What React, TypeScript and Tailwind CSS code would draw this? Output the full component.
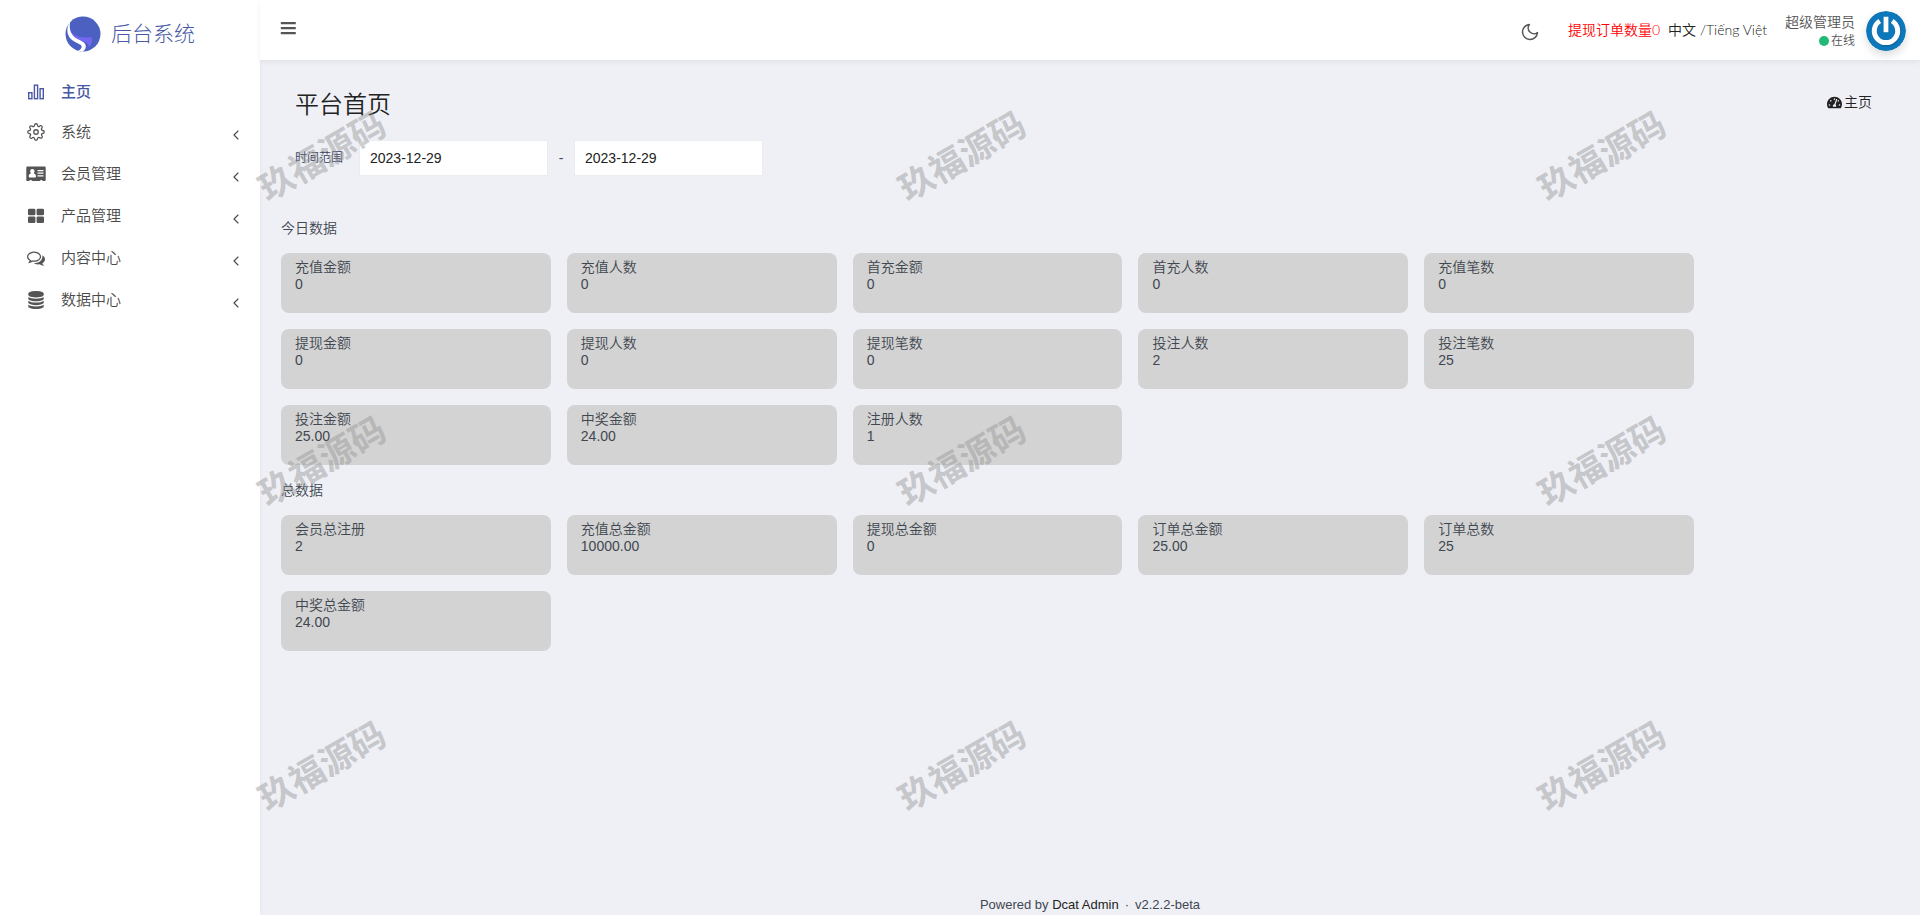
import React, { useState } from "react";
import { FaTachometerAlt } from "react-icons/fa";
import { FiMoon, FiChevronLeft, FiSettings } from "react-icons/fi";

type Stat = { label: string; value: string };

const TODAY: Stat[] = [
  { label: "充值金额", value: "0" },
  { label: "充值人数", value: "0" },
  { label: "首充金额", value: "0" },
  { label: "首充人数", value: "0" },
  { label: "充值笔数", value: "0" },
  { label: "提现金额", value: "0" },
  { label: "提现人数", value: "0" },
  { label: "提现笔数", value: "0" },
  { label: "投注人数", value: "2" },
  { label: "投注笔数", value: "25" },
  { label: "投注金额", value: "25.00" },
  { label: "中奖金额", value: "24.00" },
  { label: "注册人数", value: "1" },
];

const TOTAL: Stat[] = [
  { label: "会员总注册", value: "2" },
  { label: "充值总金额", value: "10000.00" },
  { label: "提现总金额", value: "0" },
  { label: "订单总金额", value: "25.00" },
  { label: "订单总数", value: "25" },
  { label: "中奖总金额", value: "24.00" },
];

function BarChartIcon() {
  return (
    <svg viewBox="0 0 18 18" className="size-[18px]" fill="none" stroke="currentColor" strokeWidth="1.4">
      <rect x="1.7" y="9.7" width="3.2" height="6" />
      <rect x="7.4" y="2.2" width="3.2" height="13.5" />
      <rect x="13.1" y="5.7" width="3.2" height="10" />
    </svg>
  );
}

function AddressCardIcon() {
  return (
    <svg viewBox="0 0 20 16" className="h-4 w-5" fill="currentColor">
      <path
        fillRule="evenodd"
        d="M1.2 0.5h17.6c.5 0 .9.4.9.9v12.7c0 .5-.4.9-.9.9H16.500v-.5c0-.3-.2-.6-.6-.6h-1.100c-.4 0-.6.3-.6.6v.5H5.800v-.5c0-.3-.2-.6-.6-.6H4.100c-.4 0-.6.3-.6.6v.5H1.200c-.5 0-.9-.4-.9-.9V1.400c0-.5.4-.9.9-.9zM6.300 3C5 3 4.200 3.900 4.200 5.200c0 .9.3 1.700.8 2.200-1.300.2-2.300 1-2.300 2.800 0 .8.5 1.300 1.200 1.300h4.900c.7 0 1.200-.5 1.200-1.300 0-1.800-1-2.600-2.300-2.800.5-.5.8-1.300.8-2.200C8.500 3.900 7.600 3 6.300 3zM11.500 4v1.200h6V4zM11.500 6.600v1.200h6V6.600zM11.500 9.200v1.200h6V9.200z"
      />
    </svg>
  );
}

function GridIcon() {
  return (
    <svg viewBox="0 0 18 18" className="size-[18px]" fill="currentColor">
      <rect x="1" y="1.800" width="7.400" height="6.500" rx="1.200" />
      <rect x="9.600" y="1.800" width="7.400" height="6.500" rx="1.200" />
      <rect x="1" y="9.500" width="7.400" height="6.500" rx="1.200" />
      <rect x="9.600" y="9.500" width="7.400" height="6.500" rx="1.200" />
    </svg>
  );
}

function CommentsIcon() {
  return (
    <svg viewBox="0 0 1792 1792" className="size-[18px]" fill="currentColor">
      <path d="M704 384q-153 0-286 52t-211.500 141-78.500 191q0 82 53 158t149 132l97 56-35 84q34-20 62-39l44-31 53 10q78 14 153 14 153 0 286-52t211.500-141 78.500-191-78.500-191-211.500-141-286-52zm0-128q191 0 353.500 68.500t256.500 186.500 94 257-94 257-256.500 186.500-353.500 68.500q-86 0-176-16-124 88-278 128-36 9-86 16h-3q-11 0-20.500-8t-11.500-21q-1-3-1-6.500t.5-6.500 2-6l2.500-5 3.500-5.500 4-5 4.500-5 4-4.500q5-6 23-25t26-29.500 22.500-29 25-38.500 20.500-44q-124-72-195-177t-71-224q0-139 94-257t256.500-186.500 353.500-68.500zm822 1169q10 24 20.500 44t25 38.500 22.500 29 26 29.500 23 25q1 1 4 4.500t4.500 5 4 5 3.500 5.500l2.500 5 2 6 .5 6.500-1 6.500q-3 14-13 22t-22 7q-50-7-86-16-154-40-278-128-90 16-176 16-271 0-472-132 58 4 88 4 161 0 309-45t264-129q125-92 192-212t67-254q0-77-23-152 129 71 204 178t75 230q0 120-71 224.500t-195 176.500z" />
    </svg>
  );
}

function DatabaseIcon() {
  return (
    <svg viewBox="0 0 1792 1792" className="size-[18px]" fill="currentColor">
      <path d="M896 768q237 0 443-43t325-127v170q0 69-103 128t-280 93.500-385 34.500-385-34.500-280-93.500-103-128v-170q119 84 325 127t443 43zm0 768q237 0 443-43t325-127v170q0 69-103 128t-280 93.500-385 34.500-385-34.500-280-93.500-103-128v-170q119 84 325 127t443 43zm0-384q237 0 443-43t325-127v170q0 69-103 128t-280 93.500-385 34.500-385-34.500-280-93.500-103-128v-170q119 84 325 127t443 43zm0-1152q208 0 385 34.500t280 93.500 103 128v128q0 69-103 128t-280 93.500-385 34.500-385-34.500-280-93.500-103-128v-128q0-69 103-128t280-93.500 385-34.500z" />
    </svg>
  );
}

function Logo() {
  return (
    <svg viewBox="0 0 36 36" className="size-9" aria-hidden="true">
      <circle cx="18" cy="18" r="17.500" fill="#4c60c2" />
      <path d="M4.500 14C7 18.500 12 20.500 17 21.300c4 .5 8 .4 9.500-.3 1.500 3 .5 7-2.500 10.500 0-4-3-5.500-7.500-6.500C10 23.500 5 20 4.500 14z" fill="#7367f0" />
      <path d="M5.200 5.500C2.300 9.500 1.500 15 3.500 19.500c2.500 5.500 8 7 12 9.200 2.300 1.600 1 4.500-2.500 6.300l4.500.8c2.900-1.900 4-4.400 3-7-1.200-3-4.800-4-8.500-6C5.800 19.500 3.800 13 5.200 5.500z" fill="#fff" />
    </svg>
  );
}

function Avatar() {
  return (
    <svg viewBox="0 0 40 40" className="mt-0.5 size-10 rounded-full shadow-[0_4px_8px_rgba(0,0,0,0.14)]" role="img" aria-label="超级管理员">
      <circle cx="20" cy="20" r="20" fill="#0c77b9" />
      <g fill="none">
        <path d="M13.500 9.800A12.200 12.200 0 1 0 26.500 9.800M20 7v14" stroke="#065a90" strokeWidth="5" transform="translate(.6 .8)" opacity=".5" />
        <path d="M13.800 10A11.700 11.700 0 1 0 26.200 10" stroke="#fff" strokeWidth="5" />
        <path d="M20 5.800v15.400" stroke="#fff" strokeWidth="4.800" />
      </g>
    </svg>
  );
}

const MENU = [
  { label: "系统", icon: <FiSettings className="size-[18px]" strokeWidth={1.7} /> },
  { label: "会员管理", icon: <AddressCardIcon /> },
  { label: "产品管理", icon: <GridIcon /> },
  { label: "内容中心", icon: <CommentsIcon /> },
  { label: "数据中心", icon: <DatabaseIcon /> },
];

function StatGrid({ title, stats }: { title: string; stats: Stat[] }) {
  return (
    <section>
      <h2 className="text-sm leading-5">{title}</h2>
      <div className="mt-[15px] flex flex-wrap gap-4">
        {stats.map((s) => (
          <div key={s.label} className="h-[60px] w-1/6 rounded-lg bg-[#d3d3d3] px-3.5 pt-1.5 text-sm leading-[17px]">
            <p>{s.label}</p>
            <p>{s.value}</p>
          </div>
        ))}
      </div>
    </section>
  );
}

export default function App() {
  const [from, setFrom] = useState("2023-12-29");
  const [to, setTo] = useState("2023-12-29");
  const field = "h-9 w-[189px] border border-[#ebecf0] bg-white px-2.5 text-sm text-[#222]";

  return (
    <div className="relative flex min-h-screen bg-[#eff0f6] font-['Liberation_Sans','Noto_Sans_CJK_SC',sans-serif] font-[350] text-[#414750]">
      <aside className="w-[260px] shrink-0 bg-white text-[#4a4a4a] shadow-[0_0_4px_rgba(0,0,0,0.06)]">
        <a href="#" className="mb-0.5 flex h-[67px] items-center justify-center gap-2.5 text-[21px] font-light text-[#4858a5]">
          <Logo />
          后台系统
        </a>
        <nav className="text-[15px]">
          <a href="#" className="flex h-[42px] items-center pt-1 pl-[26px] font-medium text-[#4858a5]">
            <span className="mr-[15px] flex w-5 justify-center"><BarChartIcon /></span>
            主页
          </a>
          {MENU.map((m) => (
            <a key={m.label} href="#" className="flex h-[42px] items-center pr-4 pl-[26px]">
              <span className="mr-[15px] flex w-5 justify-center text-[#555]">{m.icon}</span>
              <span className="flex-1">{m.label}</span>
              <FiChevronLeft className="mt-1.5 size-4" strokeWidth={1.7} />
            </a>
          ))}
        </nav>
      </aside>

      <div className="flex min-w-0 flex-1 flex-col">
        <header className="flex h-[60px] items-center bg-white pr-3.5 pl-5 font-['Lato','Noto_Sans_CJK_SC',sans-serif] text-sm text-[#555] shadow-[0_2px_5px_rgba(0,0,0,0.06)]">
          <button type="button" aria-label="菜单" className="mb-1">
            <svg viewBox="0 0 16 14" className="h-3.5 w-4" fill="#555">
              <rect x="0.800" y="1" width="15" height="2.300" rx=".6" />
              <rect x="0.800" y="6" width="15" height="2.300" rx=".6" />
              <rect x="0.800" y="11" width="15" height="2.300" rx=".6" />
            </svg>
          </button>
          <button type="button" aria-label="夜间模式" className="mt-1 mr-7 ml-auto">
            <FiMoon className="size-5" strokeWidth={1.8} />
          </button>
          <a href="#" className="mr-2 text-[#f00]">提现订单数量0</a>
          <p className="mr-[18px] text-[#222]">
            <a href="#">中文</a> /<a href="#">Tiếng Việt</a>
          </p>
          <div className="mt-0.5 mr-[11px] text-right">
            <p className="leading-5">超级管理员</p>
            <p className="flex items-center justify-end gap-0.5 text-xs leading-[18px]">
              <span className="size-2.5 rounded-full bg-[#21b978]" />
              在线
            </p>
          </div>
          <Avatar />
        </header>

        <main className="flex-1 px-5">
          <div className="flex items-start justify-between px-[15px] pt-[27px] text-[#222]">
            <h1 className="text-2xl leading-9">平台首页</h1>
            <nav className="pt-[5px] pr-[13px] text-sm">
              <a href="#" className="flex items-center gap-0.5">
                <FaTachometerAlt className="size-[15px]" />
                主页
              </a>
            </nav>
          </div>

          <form className="mt-[17px] flex items-center pl-[15px] text-sm">
            <label htmlFor="from" className="mr-4 text-xs text-[#333c5a]">时间范围</label>
            <input id="from" value={from} onChange={(e) => setFrom(e.target.value)} className={field} />
            <span className="w-[26px] text-center">-</span>
            <input aria-label="结束日期" value={to} onChange={(e) => setTo(e.target.value)} className={field} />
          </form>

          <div className="mt-[42px] space-y-[15px] pl-px">
            <StatGrid title="今日数据" stats={TODAY} />
            <StatGrid title="总数据" stats={TOTAL} />
          </div>
        </main>

        <footer className="flex justify-center gap-1.5 text-[13px] leading-5">
          <p>Powered by <a href="#" className="text-[#222]">Dcat Admin</a></p>
          <span>·</span>
          <p>v2.2.2-beta</p>
        </footer>
      </div>

      <div aria-hidden="true" className="pointer-events-none absolute inset-0 grid grid-cols-3 grid-rows-3 place-items-center overflow-hidden">
        {Array.from({ length: 9 }, (_, i) => (
          <span key={i} className="mt-2 ml-1 -rotate-30 text-[35px] leading-none font-bold text-[rgba(147,147,147,0.45)]">玖福源码</span>
        ))}
      </div>
    </div>
  );
}
